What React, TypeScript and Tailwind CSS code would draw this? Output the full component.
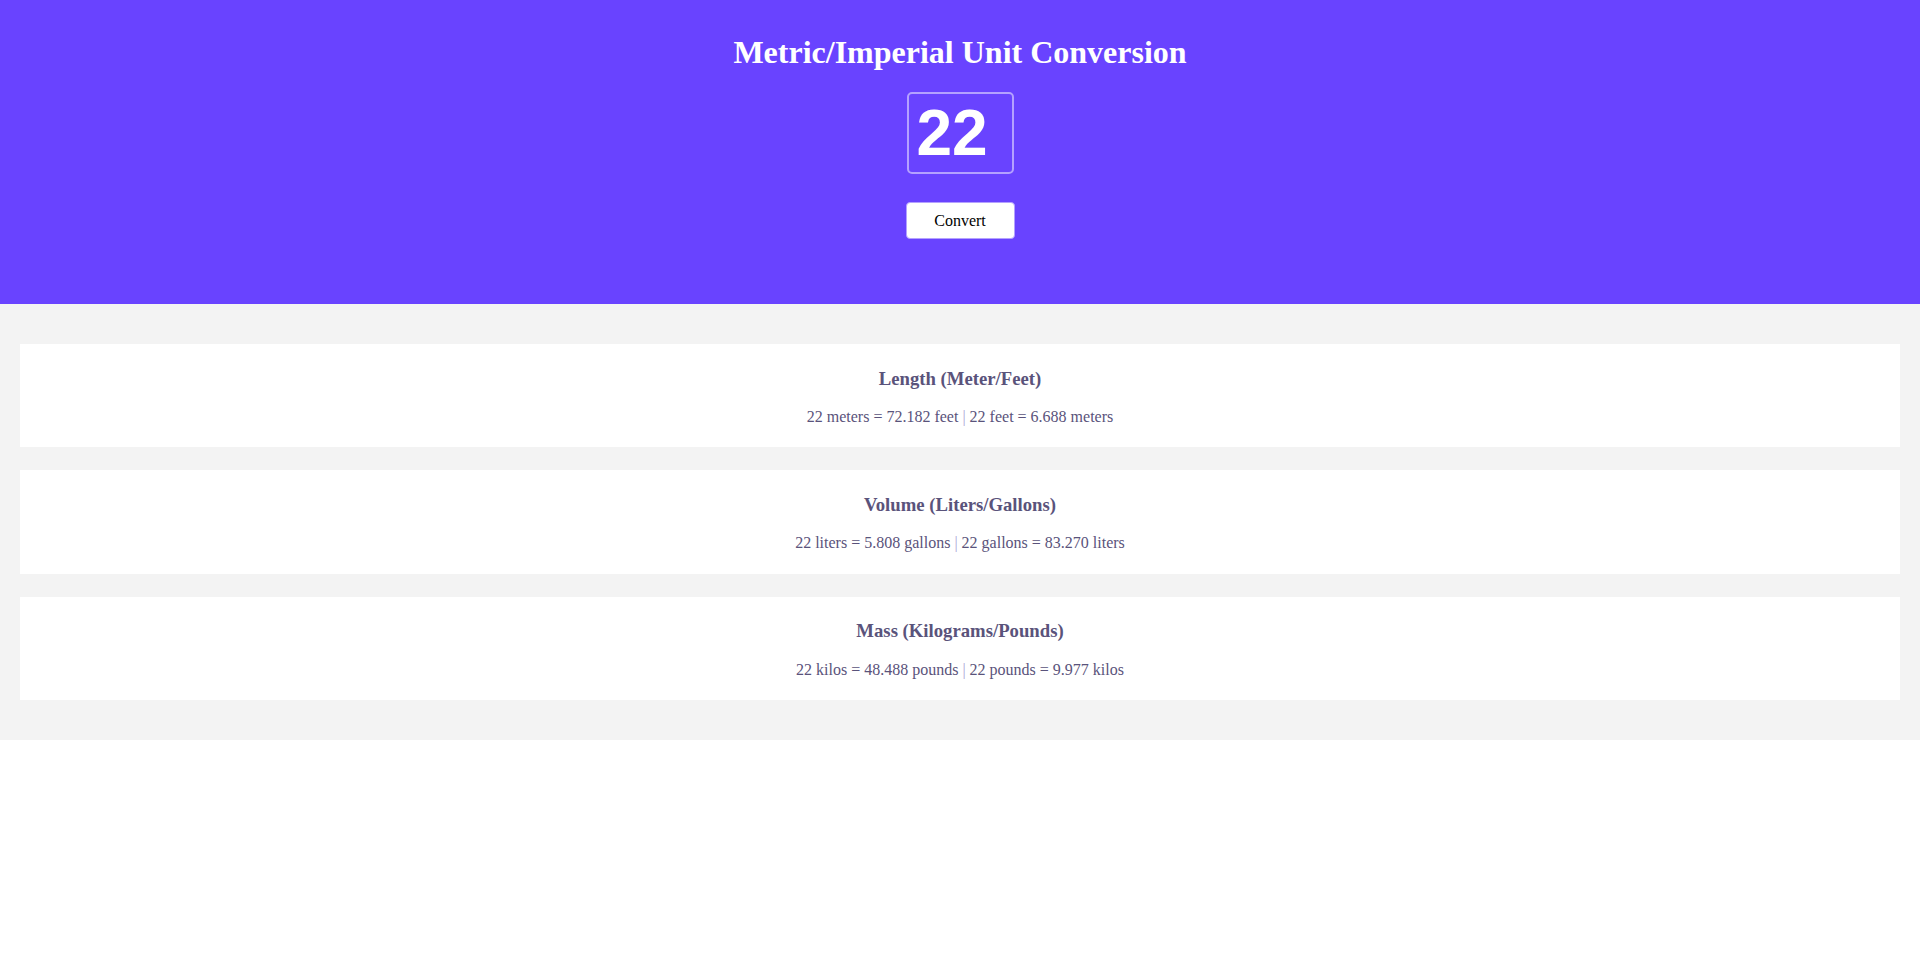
import React from "react";

const conversions = [
  {
    title: "Length (Meter/Feet)",
    left: "22 meters = 72.182 feet",
    right: "22 feet = 6.688 meters",
  },
  {
    title: "Volume (Liters/Gallons)",
    left: "22 liters = 5.808 gallons",
    right: "22 gallons = 83.270 liters",
  },
  {
    title: "Mass (Kilograms/Pounds)",
    left: "22 kilos = 48.488 pounds",
    right: "22 pounds = 9.977 kilos",
  },
];

function App() {
  return (
    <div className="min-h-screen bg-white font-['Liberation_Serif',serif]">
      <header className="flex flex-col items-center bg-[#6943ff] pt-[34px] pb-[65px]">
        <h1 className="text-[32px] leading-[37px] font-bold text-white">
          Metric/Imperial Unit Conversion
        </h1>
        <input
          type="text"
          defaultValue="22"
          className="mt-[21px] h-[82px] w-[107px] rounded-[5px] border-2 border-[#b4a1ff] bg-transparent px-[8px] font-['Liberation_Sans',Arial,sans-serif] text-[64px] font-bold text-white outline-none"
        />
        <button className="mt-[28px] h-[37px] w-[109px] rounded-[4px] border border-[#b4a1ff] bg-white text-[16px] text-black">
          Convert
        </button>
      </header>

      <section className="flex flex-col gap-[23px] bg-[#f3f3f3] px-[20px] py-[40px]">
        {conversions.map((c) => (
          <div key={c.title} className="bg-white p-[5px] text-center text-[#5a537b]">
            <h3 className="mt-[18.72px] text-[18.72px] leading-[21.5px] font-bold">
              {c.title}
            </h3>
            <p className="mt-[18.72px] mb-[16px] text-[16px] leading-[18.4px]">
              {c.left} <span className="text-[#a9a3d6]">|</span> {c.right}
            </p>
          </div>
        ))}
      </section>
    </div>
  );
}

export default App;
